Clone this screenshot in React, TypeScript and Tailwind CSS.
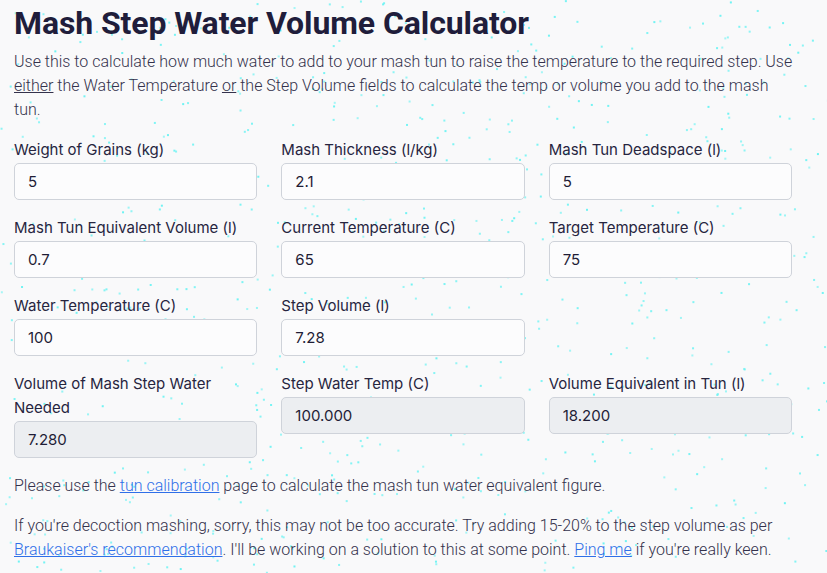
import React from 'react';

const fields = [
  { label: 'Weight of Grains (kg)', value: '5' },
  { label: 'Mash Thickness (l/kg)', value: '2.1' },
  { label: 'Mash Tun Deadspace (l)', value: '5' },
  { label: 'Mash Tun Equivalent Volume (l)', value: '0.7' },
  { label: 'Current Temperature (C)', value: '65' },
  { label: 'Target Temperature (C)', value: '75' },
  { label: 'Water Temperature (C)', value: '100' },
  { label: 'Step Volume (l)', value: '7.28' },
];

const results = [
  { label: 'Volume of Mash Step Water Needed', value: '7.280' },
  { label: 'Step Water Temp (C)', value: '100.000' },
  { label: 'Volume Equivalent in Tun (l)', value: '18.200' },
];

// scattered cyan specks across the page background
function makeDots() {
  let seed = 1337;
  const rand = () => {
    seed = (seed * 16807) % 2147483647;
    return seed / 2147483647;
  };
  const dots: { x: number; y: number; o: number }[] = [];
  for (let i = 0; i < 800; i++) {
    dots.push({ x: rand() * 827, y: rand() * 573, o: 0.6 + rand() * 0.4 });
  }
  return dots;
}

const dots = makeDots();

function Field({ label, value, readOnly }: { label: string; value: string; readOnly?: boolean }) {
  return (
    <div className="flex flex-col">
      <label className="mb-px text-[15px] leading-6 text-[#27253f]">{label}</label>
      <input
        readOnly
        value={value}
        className={
          'h-[37px] w-full rounded-[5px] border border-[#cfd3da] px-[13px] text-[15px] text-[#1f1d36] outline-none ' +
          (readOnly ? 'bg-[#eceef1]' : 'bg-[#fcfcfd]')
        }
        style={{ fontFamily: 'Inter, sans-serif' }}
      />
    </div>
  );
}

export default function App() {
  return (
    <div className="relative min-h-[573px] w-full overflow-hidden bg-[#f9f9fa]">
      <svg className="pointer-events-none absolute inset-0" width="827" height="573">
        {dots.map((d, i) => (
          <rect key={i} x={d.x} y={d.y} width="2" height="2" fill="#6ef3f3" opacity={d.o} />
        ))}
      </svg>

      <div
        className="relative w-[808px] px-[14px] pt-[4px] font-light text-[#34324c]"
        style={{ fontFamily: "'Roboto Light', Roboto, sans-serif" }}
      >
        <h1
          className="mb-2 text-[32px] font-bold leading-[38px] tracking-[-0.1px] text-[#201d3b]"
          style={{ fontFamily: 'Roboto, sans-serif' }}
        >
          Mash Step Water Volume Calculator
        </h1>
        <p className="text-[16px] leading-6">
          Use this to calculate how much water to add to your mash tun to raise the temperature to the
          required step. Use <u>either</u> the Water Temperature <u>or</u> the Step Volume fields to
          calculate the temp or volume you add to the mash tun.
        </p>

        <div
          className="mt-4 grid w-[778px] grid-cols-3 items-start gap-x-6 gap-y-4 font-normal"
          style={{ fontFamily: 'Inter, sans-serif' }}
        >
          {fields.map((f) => (
            <Field key={f.label} label={f.label} value={f.value} />
          ))}
          <div />
          {results.map((f) => (
            <Field key={f.label} label={f.label} value={f.value} readOnly />
          ))}
        </div>

        <p className="mt-4 text-[16px] leading-6">
          Please use the{' '}
          <a href="#" className="text-[#2f6fe8] underline">
            tun calibration
          </a>{' '}
          page to calculate the mash tun water equivalent figure.
        </p>
        <p className="mt-4 text-[16px] leading-6">
          If you're decoction mashing, sorry, this may not be too accurate. Try adding 15-20% to the step
          volume as per{' '}
          <a href="#" className="text-[#2f6fe8] underline">
            Braukaiser's recommendation
          </a>
          . I'll be working on a solution to this at some point.{' '}
          <a href="#" className="text-[#2f6fe8] underline">
            Ping me
          </a>{' '}
          if you're really keen.
        </p>
      </div>
    </div>
  );
}
